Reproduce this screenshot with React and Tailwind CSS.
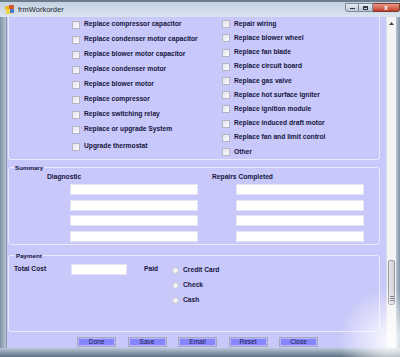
import React from 'react';

const leftItems = [
  'Replace compressor capacitor',
  'Replace condenser motor capacitor',
  'Replace blower motor capacitor',
  'Replace condenser motor',
  'Replace blower motor',
  'Replace compressor',
  'Replace switching relay',
  'Replace or upgrade System',
  'Upgrade thermostat',
];

const rightItems = [
  'Repair wiring',
  'Replace blower wheel',
  'Replace fan blade',
  'Replace circuit board',
  'Replace gas valve',
  'Replace hot surface igniter',
  'Replace ignition module',
  'Replace induced draft motor',
  'Replace fan and limit control',
  'Other',
];

const buttons = ['Done', 'Save', 'Email', 'Reset', 'Close'];

const CheckRow = ({ label, className }) => (
  <label className={`flex items-center gap-[4px] ${className}`}>
    <span className="w-[8px] h-[8px] border border-[#b4b4c4] bg-gradient-to-br from-[#e4e4ec] to-[#fbfbff] shrink-0" />
    <span className="text-[6.7px] font-bold leading-none text-[#15153c]">{label}</span>
  </label>
);

const TextBox = ({ className }) => (
  <div className={`bg-white border border-[#e4e4f4] ${className}`} />
);

const Radio = ({ label }) => (
  <label className="flex items-center gap-[4px] h-[15px]">
    <span className="w-[7px] h-[7px] rounded-full border border-[#c4c4d0] bg-[#f2f2f6] shrink-0" />
    <span className="text-[6.7px] font-bold leading-none text-[#15153c]">{label}</span>
  </label>
);

const App = () => {
  return (
    <div className="w-[400px] h-[357px] overflow-hidden relative flex flex-col bg-[#9fb0c2] font-['Liberation_Sans',Arial,sans-serif]">
      {/* title bar */}
      <div className="h-[17px] flex flex-col shrink-0">
        <div className="h-[2px] bg-[#6d7c8c]" />
        <div className="flex-1 flex items-center bg-gradient-to-b from-[#c4d2e1] to-[#dbe4ee] pl-[5px]">
          <svg width="10" height="9" viewBox="0 0 10 9" className="shrink-0">
            <rect x="0" y="1" width="5" height="4" fill="#e8b820" />
            <rect x="4" y="0" width="5" height="4" fill="#d85a2a" />
            <rect x="1" y="4" width="5" height="5" fill="#f2d04a" />
            <rect x="5" y="4" width="4" height="4" fill="#4a7ac8" />
          </svg>
          <span className="ml-[3px] text-[7.5px] leading-none text-[#1d2633]">frmWorkorder</span>
          <div className="ml-auto self-start mt-[1px] flex">
            <div className="w-[14px] h-[9px] border border-[#7d8a98] rounded-bl-[3px] bg-gradient-to-b from-[#e8eef4] to-[#b9c6d4] flex items-end justify-center pb-[2px]">
              <span className="w-[5px] h-[1px] bg-[#2f3b48]" />
            </div>
            <div className="w-[14px] h-[9px] border-y border-r border-[#7d8a98] bg-gradient-to-b from-[#e8eef4] to-[#b9c6d4] flex items-center justify-center">
              <span className="w-[5px] h-[4px] border border-[#2f3b48] border-t-2" />
            </div>
            <div className="w-[27px] h-[9px] border-y border-r border-[#7a3a32] rounded-br-[3px] bg-gradient-to-b from-[#e89888] to-[#c23c28] flex items-center justify-center">
              <span className="text-[7px] font-bold leading-none text-white">x</span>
            </div>
          </div>
        </div>
      </div>

      {/* body */}
      <div className="h-[331px] flex shrink-0">
        <div className="w-[7px] bg-gradient-to-r from-[#7f92a6] to-[#b7c5d4] border-r border-[#8c9aa8]" />
        <div className="flex-1 flex bg-[#c8c8fa]">
          {/* content */}
          <div className="w-[379px] flex flex-col">
            {/* repairs group */}
            <div className="ml-[1px] w-[372px] h-[143px] border-x border-b border-[#eaeaff] rounded-b-[3px] flex">
              <div className="ml-[63px] w-[150px] flex flex-col">
                {leftItems.map((item, i) => (
                  <CheckRow
                    key={item}
                    label={item}
                    className={i === leftItems.length - 1 ? 'h-[15px] mt-[2px]' : 'h-[15px]'}
                  />
                ))}
              </div>
              <div className="flex flex-col">
                {rightItems.map((item) => (
                  <CheckRow key={item} label={item} className="h-[14.3px]" />
                ))}
              </div>
            </div>

            {/* summary group */}
            <div className="relative ml-[1px] mt-[7px] w-[372px] h-[78px] border border-[#eaeaff] rounded-[3px] flex pt-[5px]">
              <span className="absolute left-[5px] top-[-4px] px-[1px] bg-[#c8c8fa] text-[6.2px] font-bold leading-[7px] text-[#15153c]">
                Summary
              </span>
              <div className="ml-[38px] w-[165px] flex flex-col">
                <span className="h-[8px] text-[6.7px] font-bold leading-[8px] text-[#15153c]">Diagnostic</span>
                <div className="ml-[23px] mt-[3px] flex flex-col gap-[4.7px]">
                  <TextBox className="w-[128px] h-[11px]" />
                  <TextBox className="w-[128px] h-[11px]" />
                  <TextBox className="w-[128px] h-[11px]" />
                  <TextBox className="w-[128px] h-[11px]" />
                </div>
              </div>
              <div className="flex flex-col">
                <span className="h-[8px] text-[6.7px] font-bold leading-[8px] text-[#15153c]">Repairs Completed</span>
                <div className="ml-[24px] mt-[3px] flex flex-col gap-[4.7px]">
                  <TextBox className="w-[128px] h-[11px]" />
                  <TextBox className="w-[128px] h-[11px]" />
                  <TextBox className="w-[128px] h-[11px]" />
                  <TextBox className="w-[128px] h-[11px]" />
                </div>
              </div>
            </div>

            {/* payment group */}
            <div className="relative ml-[1px] mt-[10px] w-[372px] h-[77px] border border-[#eaeaff] rounded-[3px] flex items-start pt-[8px] pl-[5px]">
              <span className="absolute left-[6px] top-[-4px] px-[1px] bg-[#c8c8fa] text-[6.2px] font-bold leading-[7px] text-[#15153c]">
                Payment
              </span>
              <span className="w-[57px] mt-[1px] h-[8px] text-[6.7px] font-bold leading-[8px] text-[#15153c]">Total Cost</span>
              <TextBox className="w-[56px] h-[11px]" />
              <span className="ml-[17px] w-[28px] mt-[1px] h-[8px] text-[6.7px] font-bold leading-[8px] text-[#15153c]">Paid</span>
              <div className="flex flex-col -mt-[1px]">
                <Radio label="Credit Card" />
                <Radio label="Check" />
                <Radio label="Cash" />
              </div>
            </div>

            {/* buttons */}
            <div className="mt-[5px] ml-[70px] flex gap-[11.5px]">
              {buttons.map((b) => (
                <button
                  key={b}
                  className="w-[39px] h-[10px] border border-[#a8a8b8] bg-[#8585fc] shadow-[inset_0_0_0_1px_#b4b4ff] text-[6.5px] leading-none text-[#1a1a4a] flex items-center justify-center"
                >
                  {b}
                </button>
              ))}
            </div>
          </div>

          {/* scrollbar */}
          <div className="w-[10px] flex flex-col bg-[#f3f3f3] border-l border-[#dcdce4]">
            <div className="h-[12px] flex items-center justify-center">
              <svg width="5" height="3" viewBox="0 0 5 3">
                <path d="M0 3 L2.5 0 L5 3 Z" fill="#444" />
              </svg>
            </div>
            <div className="mt-[231px] mx-[1px] h-[45px] rounded-[2px] border border-[#9a9aa4] bg-gradient-to-r from-[#e6e6ea] to-[#cfcfd6] flex flex-col items-center justify-end pb-[3px] gap-[1px]">
              <span className="w-[4px] h-[1px] bg-[#707078]" />
              <span className="w-[4px] h-[1px] bg-[#707078]" />
              <span className="w-[4px] h-[1px] bg-[#707078]" />
            </div>
          </div>
        </div>
        <div className="w-[4px] bg-gradient-to-r from-[#b7c5d4] to-[#7f92a6]" />
      </div>

      {/* bottom frame */}
      <div className="flex-1 bg-gradient-to-b from-[#b9c7d6] to-[#5f7183]" />

      {/* faded corner glare */}
      <div className="absolute right-0 bottom-0 w-[70px] h-[70px] bg-[radial-gradient(circle_at_85%_75%,rgba(255,255,255,0.9),rgba(255,255,255,0)_65%)] pointer-events-none" />
    </div>
  );
};

export default App;
